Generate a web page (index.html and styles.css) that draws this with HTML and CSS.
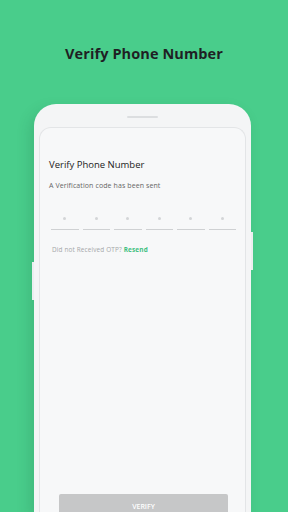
FILE: index.html
```html
<!DOCTYPE html>
<html lang="en">
  <head>
    <meta charset="UTF-8" />
    <meta name="viewport" content="width=device-width, initial-scale=1.0" />
    <title>Verify Phone Number</title>
    <link rel="stylesheet" href="styles.css">
  </head>
  <body>
    <h1 class="headline">Verify Phone Number</h1>

    <div class="phone">
      <span class="side-btn right"></span>
      <span class="side-btn left"></span>
      <div class="speaker"></div>

      <div class="screen">
        <h2 class="title">Verify Phone Number</h2>
        <p class="subtitle">A Verification code has been sent</p>

        <div class="otp">
          <div class="field"><span class="dot"></span></div>
          <div class="field"><span class="dot"></span></div>
          <div class="field"><span class="dot"></span></div>
          <div class="field"><span class="dot"></span></div>
          <div class="field"><span class="dot"></span></div>
          <div class="field"><span class="dot"></span></div>
        </div>

        <p class="resend">Did not Received OTP? <a href="#">Resend</a></p>

        <button class="verify-btn">VERIFY</button>
      </div>
    </div>
  </body>
</html>
```

FILE: styles.css
```css
body {
  margin: 0;
  height: 512px;
  overflow: hidden;
  background-color: #49cd8b;
  font-family: 'Open Sans', sans-serif;
}

.headline {
  margin: 0;
  padding-top: 44px;
  height: 20px;
  line-height: 20px;
  font-size: 14.5px;
  font-weight: 700;
  letter-spacing: 0.1px;
  color: #1f1f24;
  text-align: center;
}

.phone {
  position: relative;
  width: 217px;
  height: 408px;
  margin: 40px 0 0 34px;
  padding: 23px 5px 0;
  box-sizing: border-box;
  background-color: #f4f5f6;
  border-radius: 22px 22px 0 0;
  box-shadow: -4px 6px 14px rgba(20, 90, 55, 0.18);
}

.speaker {
  position: absolute;
  top: 12px;
  left: 93px;
  width: 31px;
  height: 2px;
  border-radius: 2px;
  background-color: #dcdee0;
}

.side-btn {
  position: absolute;
  width: 2px;
  background-color: #eceef0;
}

.side-btn.right {
  right: -2px;
  top: 128px;
  height: 38px;
}

.side-btn.left {
  left: -2px;
  top: 158px;
  height: 38px;
}

.screen {
  height: 385px;
  padding: 30px 9px 0;
  box-sizing: border-box;
  background-color: #f7f8f9;
  border: 1px solid #e3e5e7;
  border-bottom: none;
  border-radius: 12px 12px 0 0;
}

.title {
  margin: 0;
  line-height: 14px;
  font-size: 9.5px;
  font-weight: 400;
  color: #222;
}

.subtitle {
  margin: 9px 0 0;
  line-height: 10px;
  font-size: 7px;
  letter-spacing: 0.1px;
  color: #666;
}

.otp {
  display: grid;
  grid-template-columns: repeat(6, 1fr);
  gap: 4px;
  margin: 16px 0 0 2px;
}

.field {
  display: flex;
  align-items: center;
  justify-content: center;
  height: 22px;
  border-bottom: 1px solid #cfd1d3;
}

.dot {
  width: 3px;
  height: 3px;
  border-radius: 50%;
  background-color: #d3d5d7;
}

.resend {
  margin: 15px 0 0 3px;
  line-height: 10px;
  font-size: 6.4px;
  letter-spacing: 0.15px;
  color: #a4a6a8;
}

.resend a {
  color: #3fbf7f;
  font-weight: 700;
  text-decoration: none;
}

.verify-btn {
  display: block;
  width: 169px;
  height: 18px;
  margin: 239px 0 0 10px;
  padding: 7px 0 0;
  border: none;
  border-radius: 2px 2px 0 0;
  background-color: #c6c7c8;
  color: #fff;
  font-family: 'Open Sans', sans-serif;
  font-size: 7px;
  font-weight: 600;
}
```
